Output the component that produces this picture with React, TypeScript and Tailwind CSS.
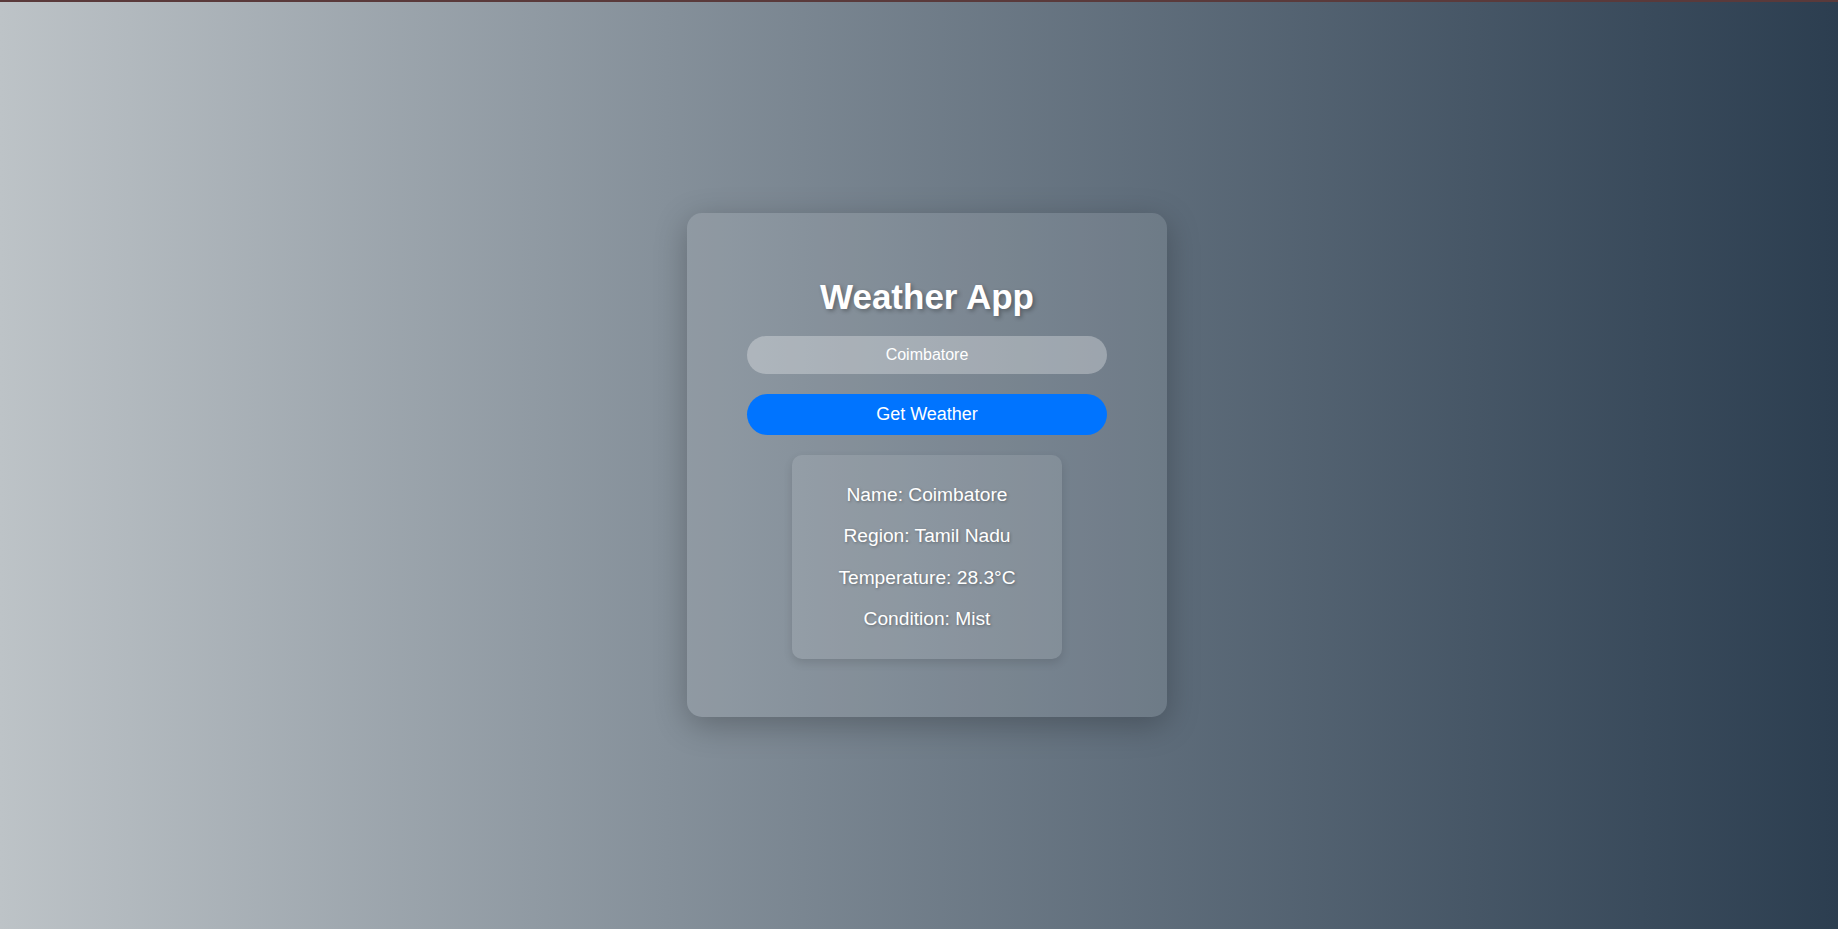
import React from "react";

export default function App() {
  const lines = [
    "Name: Coimbatore",
    "Region: Tamil Nadu",
    "Temperature: 28.3°C",
    "Condition: Mist",
  ];
  return (
    <div
      className="h-screen w-full border-t-2 border-[#5a3a3b] bg-gradient-to-r from-[#bdc3c7] to-[#2c3e50] flex items-center justify-center"
      style={{ fontFamily: '"Liberation Sans", Arial, sans-serif' }}
    >
      <div className="ml-[16px] mb-[1px] w-[480px] rounded-[15px] bg-white/10 shadow-[0_8px_32px_rgba(0,0,0,0.25)] pt-[64px] pb-[58px] flex flex-col items-center">
        <h1 className="text-[35px] leading-[40px] font-bold text-white [text-shadow:2px_2px_4px_rgba(0,0,0,0.3)]">
          Weather App
        </h1>
        <input
          readOnly
          value="Coimbatore"
          className="mt-[19px] w-[360px] h-[38px] rounded-full bg-white/30 text-white text-[16px] text-center outline-none border-none"
        />
        <button className="mt-[20px] w-[360px] h-[41px] rounded-full bg-[#0074ff] text-white text-[18px]">
          Get Weather
        </button>
        <div className="mt-[20px] w-[270px] rounded-[10px] bg-white/10 shadow-[0_4px_10px_rgba(0,0,0,0.12)] pt-[29px] pb-[29px] flex flex-col items-center gap-[19.2px]">
          {lines.map((l) => (
            <p
              key={l}
              className="text-[19.2px] leading-[22px] text-white [text-shadow:1px_1px_3px_rgba(0,0,0,0.3)]"
            >
              {l}
            </p>
          ))}
        </div>
      </div>
    </div>
  );
}
